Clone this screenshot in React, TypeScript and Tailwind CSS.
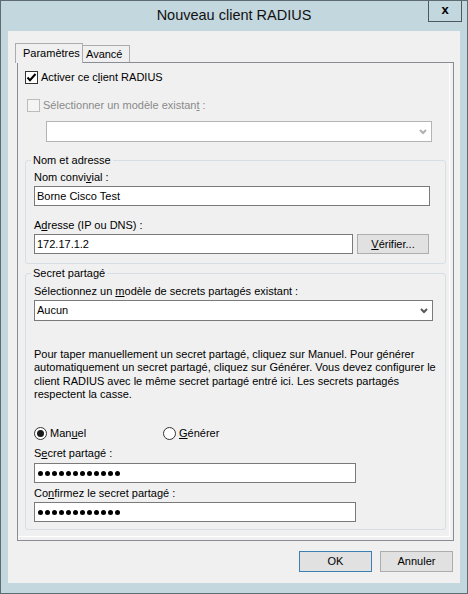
import React from "react";

function Check({ checked, disabled }: { checked?: boolean; disabled?: boolean }) {
  return (
    <div
      className={
        "w-[13px] h-[13px] border flex items-center justify-center shrink-0 " +
        (disabled ? "border-[#bcbcbc] bg-[#f4f4f4]" : "border-[#333333] bg-white")
      }
    >
      {checked && (
        <svg width="11" height="11" viewBox="0 0 11 11">
          <polyline points="1.5,5.5 4,8.2 9.5,2" fill="none" stroke="#000" strokeWidth="2" />
        </svg>
      )}
    </div>
  );
}

function Radio({ checked }: { checked?: boolean }) {
  return (
    <div className="w-[13px] h-[13px] rounded-full border border-[#333333] bg-white flex items-center justify-center shrink-0">
      {checked && <div className="w-[7px] h-[7px] rounded-full bg-[#1a1a1a]" />}
    </div>
  );
}

function Chevron({ color }: { color: string }) {
  return (
    <svg width="8" height="6" viewBox="0 0 8 6">
      <polyline points="1,1 4,4 7,1" fill="none" stroke={color} strokeWidth="2" />
    </svg>
  );
}

function Dots() {
  return (
    <div className="flex items-center gap-[2px] pl-[3px] h-full">
      {Array.from({ length: 12 }).map((_, i) => (
        <div key={i} className="w-[5px] h-[5px] rounded-full bg-black" />
      ))}
    </div>
  );
}

function Label({ children, className = "" }: { children: React.ReactNode; className?: string }) {
  return <div className={"h-[14px] leading-[14px] whitespace-nowrap " + className}>{children}</div>;
}

export default function App() {
  return (
    <div className="w-[468px] h-[594px] bg-[#c3d7df] border border-[#5f6b73] font-['Liberation_Sans',Arial,sans-serif] text-[11px] text-black">
      {/* title bar */}
      <div className="relative h-[30px] flex items-center justify-center">
        <div className="text-[14.5px] text-[#111]">Nouveau client RADIUS</div>
        <div className="absolute right-[5px] top-0 w-[34px] h-[21px] border border-t-0 border-[#4d5860] flex items-center justify-center">
          <span className="text-[13px] font-bold leading-none mb-[3px]">x</span>
        </div>
      </div>

      {/* client area */}
      <div className="mx-[7px] h-[552px] bg-[#f0f0f0] pt-[12px]">
        {/* tabs */}
        <div className="ml-[7px] flex items-end h-[19px]">
          <div className="relative z-10 w-[68px] h-[20px] mb-[-1px] bg-[#f0f0f0] border border-b-0 border-[#acacac] pl-[7px] leading-[18px]">
            Paramètres
          </div>
          <div className="w-[47px] h-[17px] border border-l-0 border-b-0 border-[#acacac] bg-[#f0f0f0] pl-[3px] leading-[17px]">
            Avancé
          </div>
        </div>

        {/* panel */}
        <div className="ml-[9px] w-[437px] h-[479px] border border-[#898c95] shadow-[inset_-3px_-3px_0_#f0f0f0,inset_-4px_-4px_0_#ffffff]">
          <div className="mt-[8px] ml-[7px] flex items-center gap-[3px] h-[13px]">
            <Check checked />
            <span className="leading-[13px]">
              Activer ce c<u>l</u>ient RADIUS
            </span>
          </div>
          <div className="mt-[15px] ml-[9px] flex items-center gap-[3px] h-[13px] text-[#8a8a8a]">
            <Check disabled />
            <span className="leading-[13px]">
              Sélectionner un modèle existan<u>t</u> :
            </span>
          </div>
          <div className="mt-[9px] ml-[28px] w-[386px] h-[21px] border border-[#b4b4b4] bg-white flex items-center justify-end pr-[4px]">
            <Chevron color="#b0b0b0" />
          </div>

          {/* Nom et adresse */}
          <fieldset className="mt-[11px] ml-[7px] w-[421px] border border-[#d5dfe5] rounded-[3px] px-[8px] pt-[3px] pb-[9px]">
            <legend className="ml-[-3px] px-[2px] leading-[14px]">Nom et adresse</legend>
            <Label>
              Nom convi<u>v</u>ial :
            </Label>
            <div className="mt-[2px] w-[396px] h-[20px] border border-[#7a7a7a] bg-white pl-[2px] leading-[18px]">
              Borne Cisco Test
            </div>
            <Label className="mt-[12px]">
              A<u>d</u>resse (IP ou DNS) :
            </Label>
            <div className="mt-[2px] flex gap-[4px]">
              <div className="w-[319px] h-[20px] border border-[#7a7a7a] bg-white pl-[2px] leading-[18px]">
                172.17.1.2
              </div>
              <div className="w-[72px] h-[20px] border border-[#adadad] bg-[#e1e1e1] flex items-center justify-center">
                <span>
                  <u>V</u>érifier...
                </span>
              </div>
            </div>
          </fieldset>

          {/* Secret partagé */}
          <fieldset className="mt-[2px] ml-[7px] w-[421px] border border-[#d5dfe5] rounded-[3px] px-[8px] pt-[4px] pb-[7px]">
            <legend className="ml-[-3px] px-[2px] leading-[14px]">Secret partagé</legend>
            <Label>
              Sélectionnez un <u>m</u>odèle de secrets partagés existant :
            </Label>
            <div className="mt-[2px] w-[399px] h-[21px] border border-[#7a7a7a] bg-white pl-[2px] pr-[4px] flex items-center justify-between">
              <span>Aucun</span>
              <Chevron color="#5a5a5a" />
            </div>
            <p className="mt-[27px] leading-[13.33px] whitespace-nowrap">
              Pour taper manuellement un secret partagé, cliquez sur Manuel. Pour générer
              <br />
              automatiquement un secret partagé, cliquez sur Générer. Vous devez configurer le
              <br />
              client RADIUS avec le même secret partagé entré ici. Les secrets partagés
              <br />
              respectent la casse.
            </p>
            <div className="mt-[25px] flex items-center h-[14px]">
              <div className="w-[129px] flex items-center gap-[3px]">
                <Radio checked />
                <span>
                  Man<u>u</u>el
                </span>
              </div>
              <div className="flex items-center gap-[3px]">
                <Radio />
                <span>
                  <u>G</u>énérer
                </span>
              </div>
            </div>
            <Label className="mt-[6px]">
              S<u>e</u>cret partagé :
            </Label>
            <div className="mt-[3px] w-[322px] h-[20px] border border-[#7a7a7a] bg-white">
              <Dots />
            </div>
            <Label className="mt-[3px]">
              Co<u>n</u>firmez le secret partagé :
            </Label>
            <div className="mt-[2px] w-[322px] h-[20px] border border-[#7a7a7a] bg-white">
              <Dots />
            </div>
          </fieldset>
        </div>

        {/* buttons */}
        <div className="mt-[10px] pr-[7px] flex justify-end gap-[8px]">
          <div className="w-[73px] h-[21px] border border-[#3c7fb1] bg-[#e1e1e1] flex items-center justify-center">
            OK
          </div>
          <div className="w-[73px] h-[21px] border border-[#adadad] bg-[#e1e1e1] flex items-center justify-center">
            Annuler
          </div>
        </div>
      </div>
    </div>
  );
}
